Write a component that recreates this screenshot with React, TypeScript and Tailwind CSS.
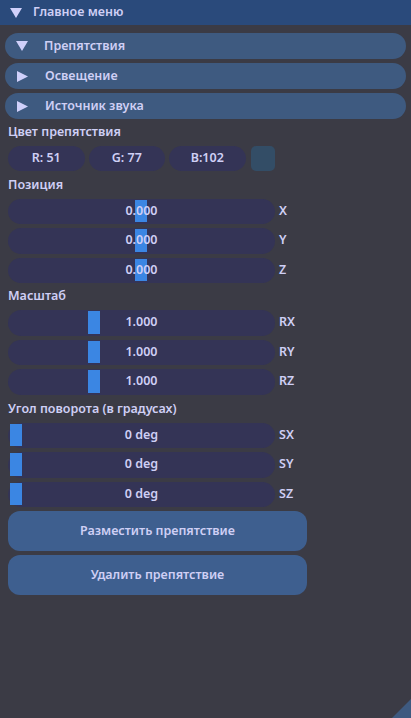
const font = { fontFamily: '"Noto Sans", "DejaVu Sans", sans-serif' };

function TriDown({ className }: { className: string }) {
  return (
    <svg className={className} viewBox="0 0 12 10" width="12" height="10">
      <polygon points="0,0 12,0 6,10" fill="#d0d0fa" />
    </svg>
  );
}

function TriRight({ className }: { className: string }) {
  return (
    <svg className={className} viewBox="0 0 11 11" width="11" height="11">
      <polygon points="0,0 11,5.5 0,11" fill="#d0d0fa" />
    </svg>
  );
}

function Header({ title, open }: { title: string; open?: boolean }) {
  return (
    <div className="h-[26px] rounded-full bg-[#3e5a80] flex items-center">
      {open ? <TriDown className="ml-[11px] mr-[16px]" /> : <TriRight className="ml-[12px] mr-[17px]" />}
      <span className="text-[12.5px] font-semibold text-[#cfcff5]">{title}</span>
    </div>
  );
}

function Label({ text }: { text: string }) {
  return (
    <div className="h-[19px] flex items-center text-[12.5px] font-semibold text-[#cfcff5]">
      {text}
    </div>
  );
}

function Slider({ value, grab, label }: { value: string; grab: number; label: string }) {
  return (
    <div className="flex items-center h-[25.5px]">
      <div className="relative w-[267px] h-full rounded-full bg-[#343456]">
        <div className="absolute top-[1px] bottom-[2px] w-[12px] bg-[#3b86e3]" style={{ left: grab }} />
        <div className="relative h-full flex items-center justify-center text-[12.5px] font-semibold text-[#cfcff5]">
          {value}
        </div>
      </div>
      <span className="ml-[4px] text-[12.5px] font-semibold text-[#cfcff5]">{label}</span>
    </div>
  );
}

const position = [
  { value: "0.000", label: "X" },
  { value: "0.000", label: "Y" },
  { value: "0.000", label: "Z" },
];
const scale = [
  { value: "1.000", label: "RX" },
  { value: "1.000", label: "RY" },
  { value: "1.000", label: "RZ" },
];
const rotation = [
  { value: "0 deg", label: "SX" },
  { value: "0 deg", label: "SY" },
  { value: "0 deg", label: "SZ" },
];

export default function App() {
  return (
    <div className="relative w-[411px] h-[718px] bg-[#3b3b45] overflow-hidden" style={font}>
      {/* title bar */}
      <div className="h-[25px] bg-[#2a4a7b] flex items-center">
        <TriDown className="ml-[10px] mr-[11px]" />
        <span className="text-[12.5px] font-semibold text-[#cfcff5]">Главное меню</span>
      </div>

      <div className="px-[5px] pt-[8px] flex flex-col gap-[4px]">
        <Header title="Препятствия" open />
        <Header title="Освещение" />
        <Header title="Источник звука" />
      </div>

      <div className="px-[8px] pt-[4px] flex flex-col gap-[4px]">
        <Label text="Цвет препятствия" />
        <div className="flex gap-[4px] h-[25px]">
          {["R: 51", "G: 77", "B:102"].map((c) => (
            <div
              key={c}
              className="w-[76.5px] rounded-full bg-[#343456] flex items-center justify-center text-[12.5px] font-semibold text-[#cfcff5]"
            >
              {c}
            </div>
          ))}
          <div className="ml-[1px] w-[24px] rounded-[5px] bg-[#334d66]" />
        </div>

        <div className="mt-[0.5px]">
          <Label text="Позиция" />
        </div>
        {position.map((s) => (
          <Slider key={s.label} value={s.value} grab={127} label={s.label} />
        ))}

        <Label text="Масштаб" />
        {scale.map((s) => (
          <Slider key={s.label} value={s.value} grab={80} label={s.label} />
        ))}

        <div className="mt-[1px]">
          <Label text="Угол поворота (в градусах)" />
        </div>
        {rotation.map((s) => (
          <Slider key={s.label} value={s.value} grab={2} label={s.label} />
        ))}

        <button className="w-[299px] h-[40px] rounded-[12px] bg-[#3e5f8f] text-[12.5px] font-semibold text-[#cfcff5]">
          Разместить препятствие
        </button>
        <button className="w-[299px] h-[40px] rounded-[12px] bg-[#3e5f8f] text-[12.5px] font-semibold text-[#cfcff5]">
          Удалить препятствие
        </button>
      </div>

      {/* resize grip */}
      <svg className="absolute right-0 bottom-0" width="19" height="19" viewBox="0 0 19 19">
        <polygon points="19,0 19,19 0,19" fill="#3e5a80" />
      </svg>
    </div>
  );
}
